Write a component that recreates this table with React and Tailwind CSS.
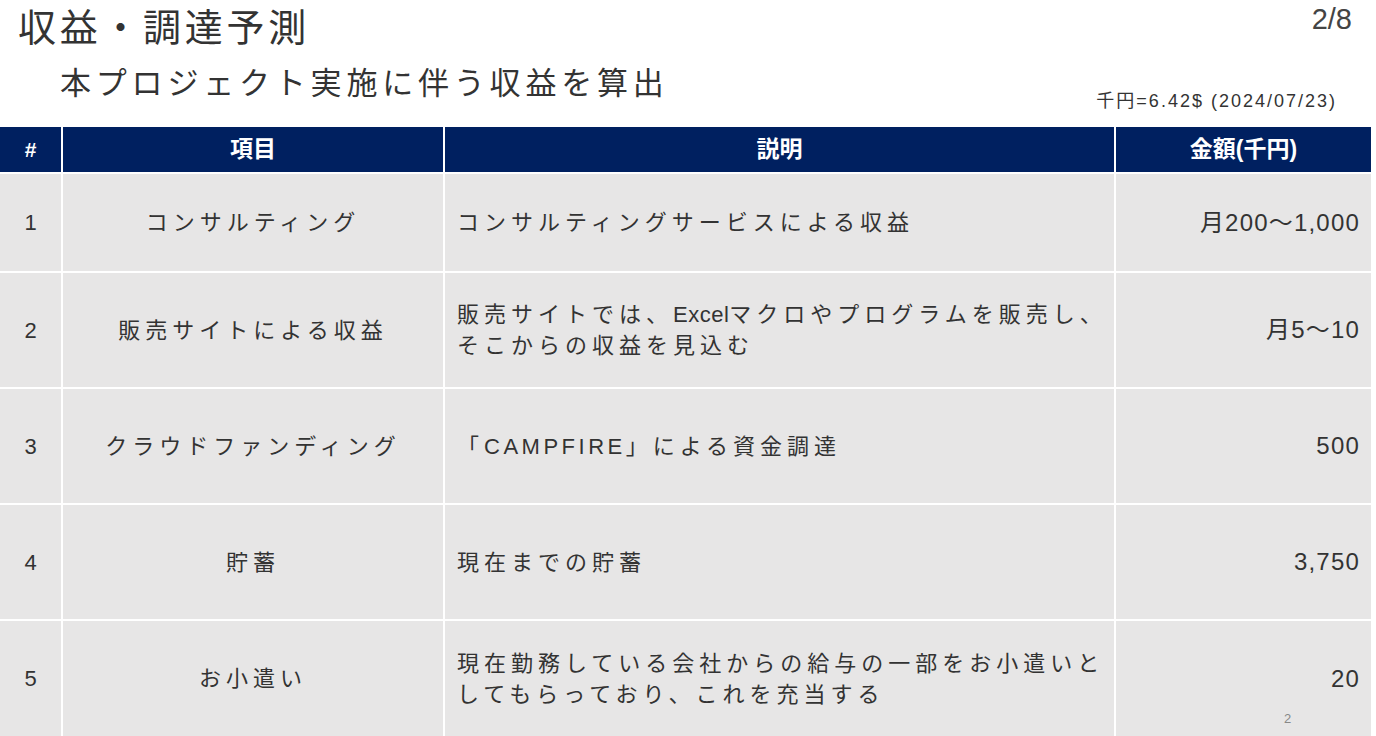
import React from 'react';

const rows = [
    { no: '1', item: 'コンサルティング', desc: [<>コンサルティングサービスによる収益</>], amount: '月200〜1,000', h: 'h-[97px]' },
    { no: '2', item: '販売サイトによる収益', desc: [<>販売サイトでは、<span className="tracking-[0.5px]">Excel</span>マクロやプログラムを販売し、</>, <>そこからの収益を見込む</>], amount: '月5〜10', h: 'h-[114px]' },
    { no: '3', item: 'クラウドファンディング', desc: [<>「<span className="tracking-[3.5px]">CAMPFIRE</span>」による資金調達</>], amount: '500', h: 'h-[114px]' },
    { no: '4', item: '貯蓄', desc: [<>現在までの貯蓄</>], amount: '3,750', h: 'h-[114px]' },
    { no: '5', item: 'お小遣い', desc: [<>現在勤務している会社からの給与の一部をお小遣いと</>, <>してもらっており、これを充当する</>], amount: '20', h: 'h-[115px]' },
];

const App = () => {
    return (
        <div className="relative w-[1376px] h-[736px] overflow-hidden bg-white text-[#333] font-['Liberation_Sans','Noto_Sans_CJK_JP',sans-serif]">
            {/* Header */}
            <div className="relative h-[127px]">
                <h1 className="absolute left-[18px] top-[4px] text-[38px] leading-[48px] tracking-[3.7px] text-[#333]">収益・調達予測</h1>
                <p className="absolute left-[60px] top-[64px] text-[31px] leading-[40px] tracking-[4.8px] text-[#333]">本プロジェクト実施に伴う収益を算出</p>
                <span className="absolute right-[24px] top-[2px] text-[29px] leading-[34px] text-[#444]">2/8</span>
                <span className="absolute right-[39px] top-[89px] text-[18px] leading-[24px] tracking-[2px] text-[#333]">千円=6.42$ (2024/07/23)</span>
            </div>

            {/* Table */}
            <div className="grid w-[1371px] grid-cols-[61px_380px_669px_255px] gap-[2px] bg-white">
                <div className="flex h-[45px] items-center justify-center bg-[#002060] text-[21px] font-bold text-white">#</div>
                <div className="flex h-[45px] items-center justify-center bg-[#002060] text-[23px] font-bold text-white">項目</div>
                <div className="flex h-[45px] items-center justify-center bg-[#002060] text-[23px] font-bold text-white">説明</div>
                <div className="flex h-[45px] items-center justify-center bg-[#002060] text-[23px] font-bold text-white">金額(千円)</div>

                {rows.map((r) => (
                    <React.Fragment key={r.no}>
                        <div className={`${r.h} flex items-center justify-center bg-[#e7e6e6] text-[22px]`}>{r.no}</div>
                        <div className={`${r.h} flex items-center justify-center bg-[#e7e6e6] text-[22px] tracking-[5px]`}>{r.item}</div>
                        <div className={`${r.h} flex flex-col justify-center bg-[#e7e6e6] pl-[12px] text-[22px] leading-[31px] tracking-[5px]`}>
                            {r.desc.map((line, i) => (
                                <span key={i} className="whitespace-nowrap">{line}</span>
                            ))}
                        </div>
                        <div className={`${r.h} flex items-center justify-end bg-[#e7e6e6] pr-[11px] text-[24px] tracking-[1.2px]`}>{r.amount}</div>
                    </React.Fragment>
                ))}
            </div>

            {/* slide number marker */}
            <span className="absolute left-[1284px] top-[712px] text-[13px] leading-[14px] text-[#888]">2</span>
        </div>
    );
};

export default App;
